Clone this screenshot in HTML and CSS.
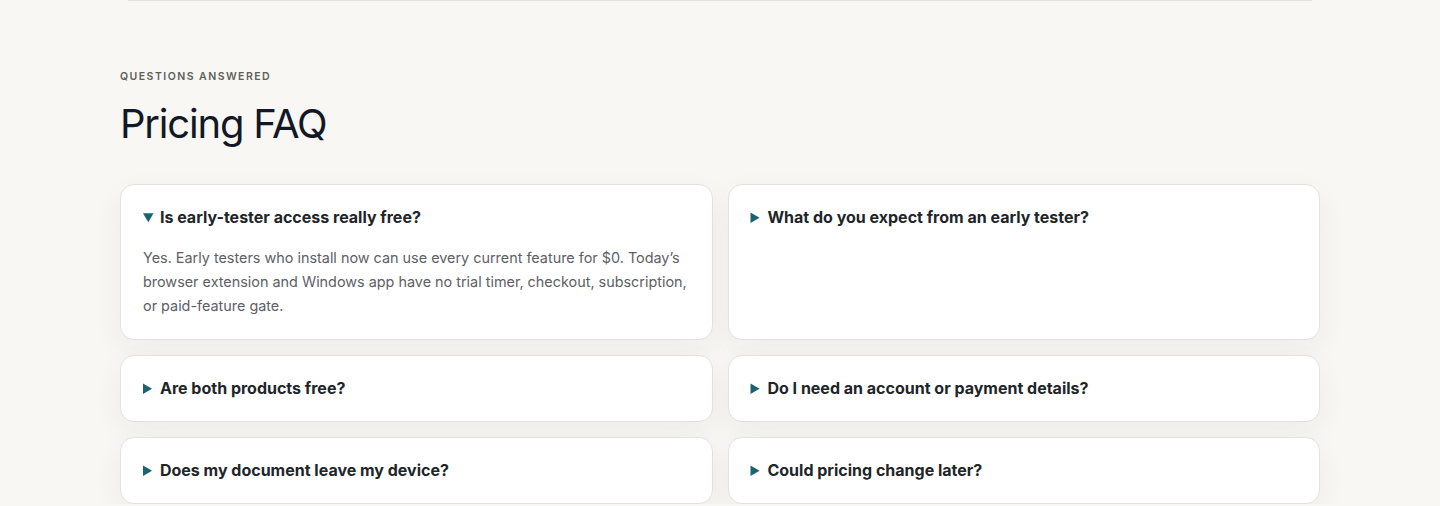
FILE: index.html
```html
<!DOCTYPE html>
<html>
<head>
	<meta charset="utf-8">
	<title>Pricing FAQ</title>
	<link rel="stylesheet" href="styles.css">
</head>
<body>

<div class="wrap">
	<div class="prev-edge"></div>

	<section class="faq">
		<p class="eyebrow">Questions answered</p>
		<h2 class="faq-title">Pricing FAQ</h2>

		<div class="faq-grid">
			<details class="faq-item" open>
				<summary>Is early-tester access really free?</summary>
				<p>Yes. Early testers who install now can use every current feature for $0. Today’s browser extension and Windows app have no trial timer, checkout, subscription, or paid-feature gate.</p>
			</details>
			<details class="faq-item">
				<summary>What do you expect from an early tester?</summary>
				<p>Use it on real documents and tell us what breaks, what feels slow, and what you wish it did.</p>
			</details>
			<details class="faq-item">
				<summary>Are both products free?</summary>
				<p>Yes. The browser extension and the Windows app are both free during early access.</p>
			</details>
			<details class="faq-item">
				<summary>Do I need an account or payment details?</summary>
				<p>No. There is no sign-up and no card required to install or use either product.</p>
			</details>
			<details class="faq-item">
				<summary>Does my document leave my device?</summary>
				<p>No. Documents are processed locally and are never uploaded.</p>
			</details>
			<details class="faq-item">
				<summary>Could pricing change later?</summary>
				<p>It may, but early testers will hear about it well in advance.</p>
			</details>
		</div>
	</section>
</div>

</body>
</html>
```

FILE: styles.css
```css
* {
	box-sizing: border-box;
}

body {
	margin: 0;
	background-color: #f8f7f4;
	font-family: Inter, "Noto Sans", sans-serif;
	color: #1f2428;
}

.wrap {
	width: 1200px;
	margin: 0 auto;
}

.prev-edge {
	height: 1px;
	margin: 0 8px;
	background-color: #e4e3df;
}

.faq {
	padding-top: 69px;
}

.eyebrow {
	margin: 0;
	font-size: 10.5px;
	font-weight: 600;
	letter-spacing: 0.14em;
	text-transform: uppercase;
	color: #5c605b;
	line-height: 14px;
}

.faq-title {
	margin: 14px 0 0;
	font-size: 40px;
	font-weight: 400;
	letter-spacing: -0.03em;
	line-height: 52px;
	color: #121826;
}

.faq-grid {
	margin-top: 34px;
	display: grid;
	grid-template-columns: 1fr 1fr;
	gap: 15px 15px;
	align-items: stretch;
}

.faq-item {
	background-color: #fff;
	border: 1px solid #e3e2de;
	border-radius: 14px;
	padding: 22px 18px 23px 22px;
	box-shadow: 0 10px 30px rgba(30, 30, 20, 0.05);
}

.faq-item summary {
	cursor: pointer;
	font-size: 16px;
	font-weight: 700;
	line-height: 20px;
	color: #212529;
}

.faq-item summary::marker {
	color: #1b6370;
}

.faq-item p {
	margin: 19px 0 -2px;
	font-size: 14.4px;
	line-height: 24px;
	color: #5d6166;
}
```
